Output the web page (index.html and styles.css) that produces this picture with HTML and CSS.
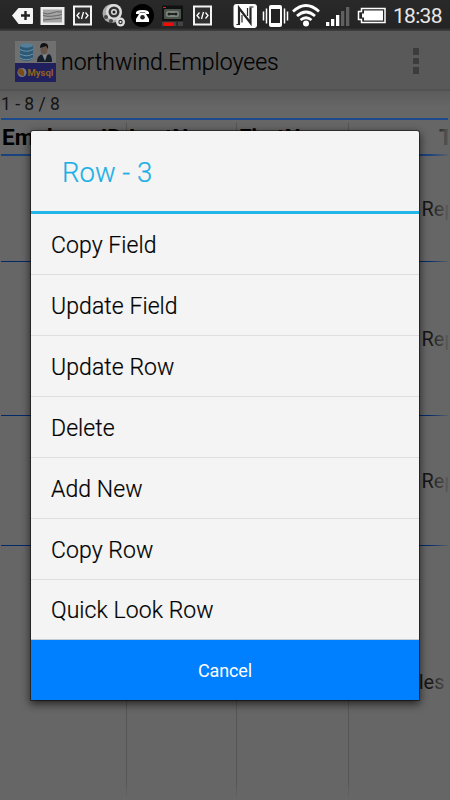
FILE: index.html
```html
<!DOCTYPE html>
<html lang="en">
<head>
<meta charset="utf-8">
<title>northwind.Employees</title>
<link rel="stylesheet" href="styles.css">
</head>
<body>
<div class="screen">
  <header class="status">
    <svg class="status-icons" width="386" height="31" viewBox="0 0 386 31">
      <defs>
        <g id="code"><rect width="19" height="20" fill="#f3f3f3"/><rect x="2" y="2" width="15" height="16" fill="#303030"/><path d="M6.500 7 4 10l2.500 3M12.500 7 15 10l-2.500 3M10.500 6.500l-2 7" fill="none" stroke="#fff" stroke-width="1.300"/></g>
      </defs>
      <path d="M12 15.500 18.500 8H32q1 0 1 1v14q0 1-1 1H18.500z" fill="#f5f5f5"/>
      <path d="M25.500 11v9M21 15.500h9" stroke="#222" stroke-width="2.400"/>
      <rect x="40.500" y="7" width="24" height="18" fill="#eee"/><rect x="43" y="9.500" width="19" height="13" fill="#a5a5a5"/>
      <path d="M43 13q5 2 9 0t10-1M43 15.500q7 2 19-1M43 20q10-1 19-2" fill="none" stroke="#666" stroke-width="1"/>
      <use href="#code" x="73" y="5.500"/>
      <circle cx="112" cy="13.500" r="9.500" fill="#aaa"/><circle cx="114" cy="12" r="8" fill="#ddd"/><circle cx="114" cy="12" r="5.500" fill="#333"/><circle cx="114" cy="12" r="3" fill="#ddd"/><circle cx="114" cy="12" r="1.500" fill="#222"/>
      <circle cx="106" cy="17" r="2" fill="#444"/><circle cx="111" cy="21" r="2" fill="#444"/><circle cx="120.500" cy="22" r="4.500" fill="#ddd"/><circle cx="120.500" cy="22" r="2.200" fill="#333"/><circle cx="120.500" cy="22" r="1" fill="#eee"/>
      <circle cx="142.500" cy="15.500" r="11.500" fill="#000"/>
      <path d="M136 14q-1-4 6.500-4t6.500 4h-3.500l-.5-2h-5l-.5 2z" fill="#fff"/><path d="M140 12.500h5l4 6.500v3h-13v-3z" fill="#fff"/><circle cx="142.500" cy="17.200" r="2.300" fill="#222"/>
      <rect x="162" y="5.500" width="21" height="16" fill="#111"/><rect x="164" y="9" width="17" height="10" rx="1" fill="#4c544e"/><rect x="166" y="11" width="13" height="6" rx="2" fill="#7f877d"/><circle cx="169" cy="14" r="1.500" fill="#222"/><circle cx="176" cy="14" r="1.500" fill="#222"/><path d="M169 14h7" stroke="#222" stroke-width="2"/><rect x="163" y="7" width="3" height="1" fill="#d22"/>
      <rect x="162" y="21.500" width="21" height="4.500" fill="#444"/><rect x="164" y="22.500" width="9" height="3.500" fill="#ee0d08"/><path d="M177 22v4" stroke="#111"/>
      <use href="#code" x="193" y="5.500"/>
      <rect x="233.500" y="4" width="23.500" height="24" rx="3" fill="#fff"/>
      <path d="M239 24V8l11.500 15V7.500" fill="none" stroke="#252525" stroke-width="2.200"/><path d="M236.500 24.500h3.500M242 22.500V15M247.500 8v8M249.500 7h4" fill="none" stroke="#252525" stroke-width="1.200"/>
      <rect x="269" y="5" width="13" height="22" rx="2" fill="#fff"/><rect x="271" y="9" width="9" height="14" fill="#222"/><path d="M266.500 8.500v15M263.500 11.500v9M284.500 8.500v15M287.500 11.500v9" stroke="#fff" stroke-width="1.500"/>
      <g fill="none" stroke="#fff" stroke-width="2.700"><path d="M293 11.500q13-12 26 0"/><path d="M297 16q9-8 18 0"/><path d="M300.500 20q5.500-4.500 11 0"/></g><circle cx="306" cy="23.500" r="3" fill="#fff"/>
      <rect x="326" y="22" width="3.300" height="4" fill="#fff"/><rect x="331" y="19" width="3.300" height="7" fill="#fff"/><rect x="336" y="15" width="3.300" height="11" fill="#fff"/><rect x="341" y="11" width="3.300" height="15" fill="#606060"/><rect x="346" y="7" width="3.300" height="19" fill="#606060"/>
      <path d="M361.500 8.500h23.500v14h-23.500v-3h-3v-8h3z" fill="none" stroke="#fff" stroke-width="1.500"/><path d="M364 10.500h19v10h-19v-3h-2v-4h2z" fill="#fff"/>
    </svg>
    <time class="clock">18:38</time>
  </header>
  <nav class="appbar">
    <svg class="logo" width="41" height="41" viewBox="0 0 41 41">
      <rect width="41" height="22" fill="#707070"/><rect y="22" width="41" height="19" fill="#20205e"/>
      <path d="M5 4v14q6.500 4 13 0V4z" fill="#2d5876"/><ellipse cx="11.500" cy="4.500" rx="6.500" ry="2.200" fill="#537f99"/><path d="M5 8.500q6.500 3.500 13 0M5 13q6.500 3.500 13 0M5 17q6.500 3.500 13 0" fill="none" stroke="#6d91a6" stroke-width="1"/>
      <path d="M22 21q0-7 6-8l3 2 3-2q3 1 3 8z" fill="#151e29"/><path d="m27 13 3 7 2-6z" fill="#83878b"/><ellipse cx="29" cy="8.500" rx="3.500" ry="4.500" fill="#665548"/><path d="M25 7q0-5 4-5 5 0 4 6l-2-3z" fill="#111"/>
      <circle cx="7" cy="31.500" r="4.500" fill="#727887"/><path d="M4 27q6 0 5 8-5 0-6-4z" fill="#7c4c17"/>
      <text class="logo-text" x="12.500" y="35">Mysql</text>
    </svg>
    <h1 class="title">northwind.Employees</h1>
    <div class="overflow"><i></i><i></i><i></i></div>
  </nav>
  <main class="content">
    <div class="pager">1 - 8 / 8</div>
    <div class="grid">
      <div class="row head"><b>EmployeeID</b><b>LastName</b><b>FirstName</b><b class="last">T</b></div>
      <div class="row r1"><span></span><span></span><span></span><span class="job">Sales Rep</span></div>
      <div class="row r2"><span></span><span></span><span></span><span class="job">Sales Rep</span></div>
      <div class="row r3"><span></span><span></span><span></span><span class="job">Sales Rep</span></div>
      <div class="row r4"><span></span><span></span><span></span><span class="short">Sales</span></div>
    </div>
  </main>
  <section class="dialog">
    <h2 class="dialog-title">Row - 3</h2>
    <ul class="menu">
      <li>Copy Field</li><li>Update Field</li><li>Update Row</li><li>Delete</li><li>Add New</li><li>Copy Row</li><li>Quick Look Row</li>
    </ul>
    <button class="cancel">Cancel</button>
  </section>
</div>
</body>
</html>
```

FILE: styles.css
```css
* { box-sizing: border-box; }
body { margin: 0; font-family: Roboto, sans-serif; color: #000; }
.screen { position: relative; width: 450px; height: 800px; overflow: hidden; background: #666; display: flex; flex-direction: column; }
.status { height: 31px; flex: none; display: flex; background: linear-gradient(#292929, #242424 28px, #303030 29px, #404040); }
.status-icons { flex: none; }
.clock { margin-left: 7px; font-size: 21px; line-height: 32px; color: #e8e8e8; letter-spacing: -0.700px; }
.appbar { height: 60px; flex: none; display: flex; align-items: center; padding: 0 31px 0 15px; background: #595959; border-bottom: 2px solid #525252; }
.logo { flex: none; margin-top: 2px; }
.logo-text { font: bold 9.500px Roboto, sans-serif; fill: #936020; }
.title { margin: 5px 0 0 5px; font-size: 23px; line-height: 28px; font-weight: 350; flex: 1; -webkit-text-stroke: 0.200px; }
.overflow { display: flex; flex-direction: column; gap: 3px; margin-top: 2px; }
.overflow i { width: 6px; height: 6.500px; background: #3c3c3c; }
.content { flex: 1; display: flex; flex-direction: column; background: linear-gradient(#5c5c5c, #666 16px); }
.pager { height: 27px; padding-left: 1px; font-size: 17.500px; line-height: 26px; color: #141414; }
.grid { flex: 1; display: flex; flex-direction: column; margin: 0 2px 0 1px; border-top: 2px solid #1d4a8c; position: relative; overflow: hidden; }
.grid::after { content: ""; position: absolute; top: -2px; right: 0; bottom: 0; width: 19px; background: linear-gradient(90deg, rgba(102,102,102,0), rgba(102,102,102,.85)); }
.grid::before { content: ""; position: absolute; left: 0; right: 0; bottom: 0; height: 20px; background: linear-gradient(rgba(102,102,102,0), #666); }
.row { display: grid; grid-template-columns: 126px 110px 112px 1fr; flex: none; border-bottom: 1px solid #032a68; white-space: nowrap; }
.row > * { min-width: 0; border-right: 1px solid #555; overflow: hidden; display: flex; align-items: center; }
.row > :last-child { border-right: 0; }
.head { height: 36px; font-size: 22.500px; padding-top: 2px; border-bottom: 2px solid #1a427c; }
.head b { padding: 0 0 2px 1px; }
.head b + b { padding-left: 2px; }
.head .last { padding-left: 90px; }
.row .job, .row .short { font-size: 20px; color: #141414; }
.row .job { padding-left: 19px; }
.row .short { padding-left: 47px; height: 272px; }
.r1 { height: 106px; }
.r2 { height: 154px; }
.r3 { height: 130px; }
.r4 { height: 251px; border-bottom: 0; }
.dialog { position: absolute; left: 31px; top: 131px; width: 388px; height: 569px; display: flex; flex-direction: column; background: #f4f4f4; border-radius: 2px 2px 0 0; box-shadow: 0 0 0 1px rgba(0,0,0,.45), 0 3px 9px 1px rgba(0,0,0,.65); }
.dialog-title { margin: 0; height: 83px; flex: none; padding-left: 31px; font-size: 27.500px; line-height: 83px; font-weight: 350; color: #1bb0e5; border-bottom: 3px solid #22b5e8; -webkit-text-stroke: 0.200px; }
.menu { list-style: none; margin: 0; padding: 0; }
.menu li { height: 61px; padding-left: 20px; font-size: 23px; line-height: 63px; font-weight: 350; letter-spacing: 0.070px; border-bottom: 1px solid #dedede; -webkit-text-stroke: 0.200px; }
.menu li:last-child { height: 60px; border-bottom-color: #c6cbd2; line-height: 62px; }
.cancel { flex: 1; border: 0; padding: 0; background: #0080ff; color: #fff; font: 18px Roboto, sans-serif; letter-spacing: -0.100px; }
```
